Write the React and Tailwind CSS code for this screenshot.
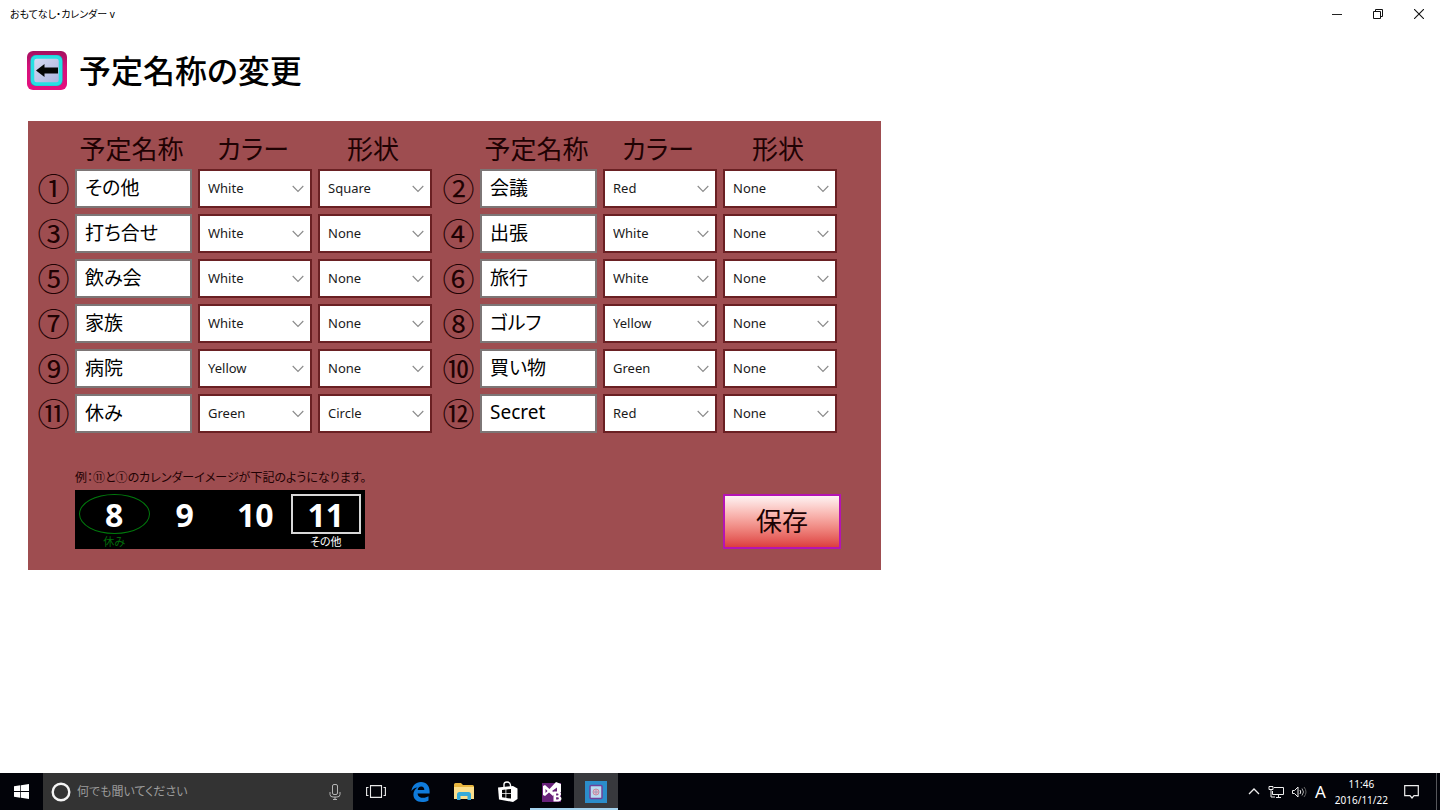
import { useState } from 'react'

const SCHEDULES = [
  { mark: '①', name: 'その他', color: 'White', shape: 'Square' },
  { mark: '②', name: '会議', color: 'Red', shape: 'None' },
  { mark: '③', name: '打ち合せ', color: 'White', shape: 'None' },
  { mark: '④', name: '出張', color: 'White', shape: 'None' },
  { mark: '⑤', name: '飲み会', color: 'White', shape: 'None' },
  { mark: '⑥', name: '旅行', color: 'White', shape: 'None' },
  { mark: '⑦', name: '家族', color: 'White', shape: 'None' },
  { mark: '⑧', name: 'ゴルフ', color: 'Yellow', shape: 'None' },
  { mark: '⑨', name: '病院', color: 'Yellow', shape: 'None' },
  { mark: '⑩', name: '買い物', color: 'Green', shape: 'None' },
  { mark: '⑪', name: '休み', color: 'Green', shape: 'Circle' },
  { mark: '⑫', name: 'Secret', color: 'Red', shape: 'None' },
]

const COLORS = ['White', 'Red', 'Yellow', 'Green']
const SHAPES = ['None', 'Square', 'Circle']

function TitleBar() {
  return (
    <header className="flex h-7 items-center justify-between pl-[10px] text-[10px] text-black">
      <span>おもてなし・カレンダー v</span>
      <div className="flex">
        <button aria-label="最小化" className="flex h-7 w-[41px] items-center justify-center">
          <svg width="10" height="10" viewBox="0 0 10 10"><path d="M0 5.5h10" stroke="#222" /></svg>
        </button>
        <button aria-label="元に戻す" className="flex h-7 w-[41px] items-center justify-center">
          <svg width="10" height="10" viewBox="0 0 10 10" fill="none" stroke="#111"><path d="M.5 2.5h7v7h-7zM2.5 2.5v-2h7v7h-2" /></svg>
        </button>
        <button aria-label="閉じる" className="flex h-7 w-[42px] items-center justify-center">
          <svg width="10" height="10" viewBox="0 0 10 10"><path d="M0 0l10 10M10 0L0 10" stroke="#111" strokeWidth="1.1" /></svg>
        </button>
      </div>
    </header>
  )
}

function BackIcon() {
  return (
    <svg width="40" height="40" viewBox="0 0 40 40">
      <defs>
        <linearGradient id="back-frame" x1="0" y1="0" x2="0" y2="1">
          <stop offset="0" stopColor="#a3105f" />
          <stop offset="0.4" stopColor="#d4117a" />
          <stop offset="1" stopColor="#e6107f" />
        </linearGradient>
        <linearGradient id="back-face" x1="0" y1="0" x2="1" y2="1">
          <stop offset="0" stopColor="#d9dcf4" />
          <stop offset="1" stopColor="#a9b0dc" />
        </linearGradient>
      </defs>
      <rect x="0" y="0" width="40" height="39" rx="6" fill="url(#back-frame)" />
      <rect x="3.500" y="4" width="32" height="31" rx="5" fill="#2a9fb4" />
      <rect x="5.500" y="6" width="28" height="27" rx="4" fill="url(#back-face)" stroke="#27e0e3" strokeWidth="3.500" />
      <path d="M9 19.500l8.500-6.500v3.500H31v6H17.500V26z" fill="#050505" />
    </svg>
  )
}

function Dropdown({ label, value, options, onChange }) {
  return (
    <div className="relative h-[39px]">
      <select
        aria-label={label}
        value={value}
        onChange={e => onChange(e.target.value)}
        className="h-full w-full appearance-none border-2 border-[#6a2023] bg-white pl-2 pr-6 text-[13px] text-[#1a1a1a] focus:outline-none"
      >
        {options.map(o => <option key={o}>{o}</option>)}
      </select>
      <svg className="pointer-events-none absolute right-2 top-4" width="12" height="8" viewBox="0 0 12 8" fill="none" stroke="#8a8a8a" strokeWidth="1.1">
        <path d="M.7 1L6 6.500 11.300 1" />
      </svg>
    </div>
  )
}

function ScheduleColumn({ items, onChange }) {
  return (
    <div className="grid grid-cols-[31px_117px_114px_114px] gap-[6px]">
      <span />
      <h2 className="pr-1 text-center text-[26px] leading-7">予定名称</h2>
      <h2 className="pr-1 text-center text-[26px] leading-7">カラー</h2>
      <h2 className="pr-1 text-center text-[26px] leading-7">形状</h2>
      {items.map(item => (
        <div key={item.mark} className="contents">
          <label htmlFor={`name-${item.mark}`} className="flex h-[39px] items-center justify-center text-[32px] leading-none">{item.mark}</label>
          <input
            id={`name-${item.mark}`}
            value={item.name}
            onChange={e => onChange(item.mark, 'name', e.target.value)}
            className="h-[39px] w-full border-2 border-[#7d7676] bg-white px-2 pb-1 text-[19px] text-black focus:outline-none"
          />
          <Dropdown label={`${item.mark} カラー`} value={item.color} options={COLORS} onChange={v => onChange(item.mark, 'color', v)} />
          <Dropdown label={`${item.mark} 形状`} value={item.shape} options={SHAPES} onChange={v => onChange(item.mark, 'shape', v)} />
        </div>
      ))}
    </div>
  )
}

function CalendarSample() {
  return (
    <div>
      <p className="mb-[3px] text-[12px] leading-[18px]">例：⑪と①のカレンダーイメージが下記のようになります。</p>
      <div className="grid h-[59px] w-[290px] grid-cols-4 bg-black px-1 pt-1 text-center text-white">
        <div>
          <div className="flex h-10 items-center justify-center rounded-[50%] border border-[#00780c] pt-[2px] text-[32px] font-bold leading-none">8</div>
          <div className="text-[11px] leading-4 text-[#006a0a]">休み</div>
        </div>
        <div className="flex h-10 items-center justify-center pt-[2px] text-[32px] font-bold leading-none">9</div>
        <div className="flex h-10 items-center justify-center pt-[2px] text-[32px] font-bold leading-none">10</div>
        <div>
          <div className="flex h-10 items-center justify-center border-2 border-[#d8d8d8] pt-[2px] text-[32px] font-bold leading-none">11</div>
          <div className="text-[11px] leading-4">その他</div>
        </div>
      </div>
    </div>
  )
}

function TaskButton({ label, active, running, children }) {
  return (
    <button
      aria-label={label}
      className={`flex h-full w-11 items-center justify-center ${active ? 'bg-[#38393d]' : ''} ${running ? 'border-b-2 border-[#a5d3ee] pt-[2px]' : ''}`}
    >
      {children}
    </button>
  )
}

function Taskbar() {
  return (
    <footer className="flex h-[37px] items-stretch bg-[#020309] text-white">
      <button aria-label="スタート" className="flex w-[43px] items-center justify-center">
        <svg width="15" height="15" viewBox="0 0 15 15" fill="#fff">
          <path d="M0 2.200l6.300-.9v5.800H0zM7 1.200L15 0v7.100H7zM0 7.900h6.300v5.800L0 12.800zM7 7.900h8V15l-8-1.200z" />
        </svg>
      </button>
      <div className="flex w-[310px] items-center gap-[6px] bg-[#333] px-2">
        <svg width="20" height="20" viewBox="0 0 20 20"><circle cx="10" cy="10" r="8.300" fill="none" stroke="#f4f4f4" strokeWidth="2.400" /></svg>
        <input aria-label="検索" placeholder="何でも聞いてください" className="min-w-0 flex-1 bg-transparent text-[12px] placeholder:text-[#9c9c9c] focus:outline-none" />
        <svg className="mr-1" width="12" height="16" viewBox="0 0 12 16" fill="none" stroke="#b5b5b5">
          <rect x="3.500" y=".5" width="5" height="10" rx="1.500" />
          <path d="M1 8v2.500Q1 13 4 13h4q3 0 3-2.500V8M6 13v2.500M4 15.500h4" />
        </svg>
      </div>
      <nav className="flex pl-px">
        <TaskButton label="タスク ビュー">
          <svg width="20" height="13" viewBox="0 0 20 13" fill="none" stroke="#e8e8e8" strokeWidth="1.100">
            <path d="M4.500.6h11v11.800h-11zM2.500 2.500H.6v8h1.900M17.500 2.500h1.900v8h-1.900" />
          </svg>
        </TaskButton>
        <TaskButton label="Microsoft Edge">
          <svg width="19" height="20" viewBox="0 0 19 20" fill="#0f7bdb">
            <path d="M.4 9C1.300 3.500 4.800 0 10 0c5.500 0 8.600 4 8.600 9.200v2.200H6.600c.2 3 2.600 4.400 5.600 4.400 2 0 3.900-.6 5.300-1.500v4.100c-1.700 1-4 1.600-6.600 1.600-5.600 0-8.500-3.400-8.500-7.500 0-3 1.500-5.700 4.300-7.100C3.800 5.600 1.900 6.900.4 9zM6.700 8h6.600c0-2-.9-3.500-3.100-3.500C8.200 4.500 6.900 6 6.700 8z" />
          </svg>
        </TaskButton>
        <TaskButton label="エクスプローラー">
          <svg width="20" height="17" viewBox="0 0 20 17">
            <path d="M0 1.500Q0 0 1.500 0H7l2 2h9.500Q20 2 20 3.500V16H0z" fill="#e8b63f" />
            <path d="M0 4h20v12H0z" fill="#fbdf8c" />
            <path d="M3 17v-5.500Q3 9 5.500 9h9Q17 9 17 11.500V17h-3.500v-4h-7v4z" fill="#35abd8" />
          </svg>
        </TaskButton>
        <TaskButton label="ストア">
          <svg width="20" height="21" viewBox="0 0 20 21">
            <path d="M6 6V3.500Q6 1 9 1t3.500 3V6" fill="none" stroke="#fff" strokeWidth="1.400" />
            <path d="M0 6.500L15 5l4.500 2.500V18L15 21 1 18.500z" fill="#fff" />
            <path d="M4 9l3.500-.4v3.600H4zM8.300 8.500l4.700-.6v4.300H8.300zM4 13h3.500v3.700L4 16.200zM8.300 13H13v4.600l-4.700-.7z" fill="#050505" />
          </svg>
        </TaskButton>
        <TaskButton label="Blend" running>
          <svg width="21" height="20" viewBox="0 0 21 20">
            <rect y="1" width="19" height="19" fill="#68217a" />
            <path d="M1 4l2-1 4.500 4L14 0l5 2v8h-4V5.500L10 9l3 2-2 3-4-3.500L3 14l-2-1zm2.500 3v4L5.500 9z" fill="#fff" />
            <path fillRule="evenodd" d="M11.500 9.500h4.600c3.600 0 3.700 3.700 1.500 4.700 3 1 2.300 5.300-1.500 5.300h-4.600zm2.600 1.900v2h1.300c1.500 0 1.500-2 0-2zm0 3.800v2.300h1.500c1.700 0 1.700-2.300 0-2.300z" fill="#fff" />
          </svg>
        </TaskButton>
        <TaskButton label="おもてなし・カレンダー" active running>
          <svg width="22" height="22" viewBox="0 0 22 22">
            <rect width="22" height="22" fill="#2b8dcb" />
            <rect x="5" y="4.500" width="12" height="13" rx="1" fill="#b8dcf0" stroke="#70419a" strokeWidth="1.500" />
            <circle cx="11" cy="11" r="3" fill="#e9b8ca" stroke="#c9899f" />
            <path d="M8.500 11h5M11 8.500v5" stroke="#8e9bb8" strokeWidth=".8" />
          </svg>
        </TaskButton>
      </nav>

      <div className="ml-auto flex items-center">
        <div className="flex items-center gap-[8px]">
          <svg width="12" height="7" viewBox="0 0 12 7" fill="none" stroke="#eee" strokeWidth="1.300"><path d="M1 6l5-5 5 5" /></svg>
          <svg width="16" height="14" viewBox="0 0 16 14" fill="none" stroke="#eee">
            <path d="M6 2.500h9.500v7H4.500V6M8 12.500h5M10.500 9.500v3M1 1.500h4v3H1zM3 4.500V12h4" />
          </svg>
          <svg width="15" height="12" viewBox="0 0 15 12" fill="none" stroke="#eee">
            <path d="M.5 4.500h2L6 1v10L2.500 7.500h-2zM8 4q1.500 2 0 4" />
            <path d="M10 2.500q3 3.500 0 7" stroke="#aaa" />
            <path d="M12 1q4 5 0 10" stroke="#666" />
          </svg>
          <span className="text-[17px] leading-none">A</span>
        </div>
        <div className="ml-[9px] text-center text-[10px] leading-4">
          <div>11:46</div>
          <div>2016/11/22</div>
        </div>
        <svg className="ml-4 mr-[17px]" width="15" height="14" viewBox="0 0 15 14" fill="none" stroke="#eee" strokeWidth="1.200">
          <path d="M.7.7h13.600v10H10l-2 2.300-2-2.300H.7z" />
        </svg>
        <div className="h-[37px] w-1 border-l border-[#55565a]" />
      </div>
    </footer>
  )
}

export default function App() {
  const [schedules, setSchedules] = useState(SCHEDULES)

  const update = (mark, key, value) => {
    setSchedules(list => list.map(s => (s.mark === mark ? { ...s, [key]: value } : s)))
  }

  return (
    <div className="flex min-h-screen flex-col bg-white font-['Noto_Sans','Noto_Sans_CJK_JP',sans-serif] [font-feature-settings:'palt']" lang="ja">
      <TitleBar />
      <main className="flex-1 px-7 pt-[23px] pb-10">
        <div className="flex items-center gap-3">
          <button aria-label="戻る" className="-ml-px"><BackIcon /></button>
          <h1 className="text-[32px] font-medium leading-10 text-black">予定名称の変更</h1>
        </div>

        <form className="mt-[30px] w-fit bg-[#9e4d50] pt-[14px] pr-10 pb-[21px] pl-[10px] text-[#1f0203]" onSubmit={e => e.preventDefault()}>
          <div className="flex gap-[11px] pr-1">
            <ScheduleColumn items={schedules.filter((_, i) => i % 2 === 0)} onChange={update} />
            <ScheduleColumn items={schedules.filter((_, i) => i % 2 === 1)} onChange={update} />
          </div>
          <div className="mt-9 flex items-end justify-between pl-[37px]">
            <CalendarSample />
            <button type="submit" className="h-[55px] w-[118px] border-2 border-[#b414b4] bg-linear-to-b from-[#fdf3f3] to-[#dc3c3f] text-[26px] text-[#1c0203]">保存</button>
          </div>
        </form>
      </main>
      <Taskbar />
    </div>
  )
}
